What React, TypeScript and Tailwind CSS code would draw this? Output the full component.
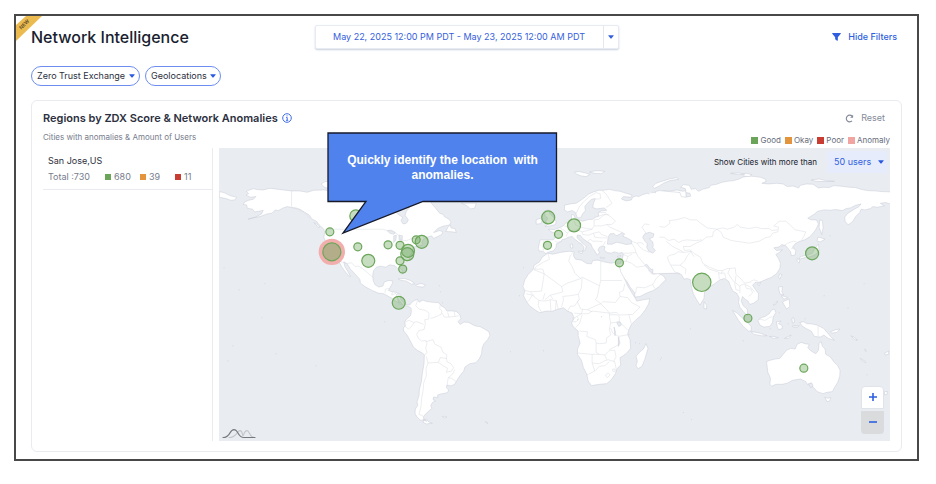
import React, {useState} from "react";

type Marker = { x: number, y: number, r: number, anomaly?: boolean };

const markers: Marker[] = [
    {x: 356, y: 216, r: 6},
    {x: 330, y: 232, r: 4},
    {x: 332, y: 252, r: 9, anomaly: true},
    {x: 358, y: 247, r: 4},
    {x: 368.5, y: 261, r: 6.5},
    {x: 388.3, y: 245, r: 4},
    {x: 400.3, y: 245.5, r: 4},
    {x: 416.5, y: 240, r: 4},
    {x: 422, y: 242, r: 6.5},
    {x: 408.3, y: 251, r: 6.5},
    {x: 407.6, y: 254.3, r: 6.5},
    {x: 400.3, y: 261, r: 4},
    {x: 403, y: 269.3, r: 4},
    {x: 399, y: 303, r: 6.5},
    {x: 548.7, y: 217.5, r: 6.5},
    {x: 574.6, y: 225.5, r: 6.5},
    {x: 559, y: 234.5, r: 4},
    {x: 548, y: 245.5, r: 4},
    {x: 620, y: 263, r: 4},
    {x: 702.5, y: 282.5, r: 9.2},
    {x: 813, y: 253.5, r: 6.5},
    {x: 748.7, y: 318.5, r: 4},
    {x: 804.7, y: 368.5, r: 4},
];

const legend = [
    {label: "Good", color: "bg-[#6aa55a]"},
    {label: "Okay", color: "bg-[#e3943c]"},
    {label: "Poor", color: "bg-[#c83c32]"},
    {label: "Anomaly", color: "bg-[#f0a5a3]"},
];

// every region is drawn three times larger around its own origin
const regions = [
    {
        id: "north-america", x: 210, y: 140,
        land: [
            "M28 155L42 158 60 167 80 172 75 180 62 181 48 176 28 172Z",
            "M109 155L118 150 132 146 140 149 160 150 180 145 196 147 220 150 245 153 270 153 292 157 312 151 340 150 360 152 360 120 640 120 665 190 678 205 690 220 700 223 704 230 718 238 724 246 720 255 700 259 684 266 672 278 690 272 700 276 696 284 686 289 672 296 666 288 652 292 640 299 636 309 640 315 625 318 612 322 607 330 606 340 598 350 600 360 585 367 572 374 570 382 578 394 577 403 571 400 564 386 556 378 540 375 528 382 512 379 500 382 492 392 489 404 490 422 496 435 507 442 519 439 524 426 538 422 550 424 546 434 540 445 536 452 548 456 562 458 566 465 564 480 568 492 578 494 588 494 588 492 575 490 561 486 548 476 540 472 522 462 505 460 487 452 468 442 452 430 450 418 438 405 422 388 412 372 402 366 405 380 414 395 422 410 416 408 404 393 394 378 388 366 376 358 365 345 354 326 348 308 342 292 345 276 340 266 328 255 320 244 306 237 298 225 284 217 270 208 258 204 245 203 232 200 218 205 205 212 196 210 186 220 172 222 150 230 130 234 114 238 138 231 155 222 160 211 148 214 134 216 128 208 112 205 110 195 100 194 104 186 116 181 130 178 138 170 122 172 108 166 116 161Z",
            "M334 132L345 125 358 124 358 145 345 143Z",
            "M708 275L715 262 722 255 724 264 736 266 740 278 728 276Z",
            "M565 417L585 416 602 422 616 432 605 433 590 424 572 421Z",
            "M618 436L634 431 648 436 640 442 622 440Z",
            "M755 190L800 190 795 205 783 207 770 196Z",
            "M312 248L320 252 330 262 325 263Z",
        ],
        water: [
            "M548 188L610 188 601 201 590 214 586 226 596 240 590 250 580 252 574 242 579 232 568 225 556 215 550 202Z",
            "M532 272L545 271 557 278 552 283 540 280Z",
            "M552 288L560 286 558 302 552 308Z",
            "M568 286L578 288 577 302 568 299Z",
        ],
        borders: [
            "M245 153V203L262 208 280 216 300 235",
            "M345 268H518L532 272 548 275 566 285 574 300 590 303 606 296 625 296 634 285 640 286 644 298",
            "M376 363L392 365 410 371 425 369 436 380 446 379 459 387 470 396 490 413",
            "M526 459L527 448 538 446M548 456L546 466 560 460",
        ],
    },
    {
        id: "south-america", x: 210, y: 290,
        land: [
            "M570 12L574 30 586 44 600 46 606 38 614 32 624 29 628 37 640 31 650 35 664 37 678 38 688 39 694 47 706 55 712 64 724 63 740 65 750 74 754 86 745 96 752 104 763 97 777 98 795 108 812 111 828 120 838 126 841 137 834 150 823 162 818 174 816 192 810 206 799 219 781 222 766 232 762 245 751 258 742 272 735 284 724 289 712 286 710 293 717 301 714 309 694 313 684 316 684 324 672 322 670 330 678 334 669 338 663 348 667 356 658 364 648 373 641 382 644 391 632 392 622 382 616 372 617 358 624 348 622 336 628 318 629 300 635 276 638 250 643 222 644 196 638 190 623 182 611 172 602 154 592 136 582 124 581 115 587 108 585 95 592 87 602 78 605 66 604 55 596 50 580 46 566 28 560 14Z",
            "M642 392L650 388 656 396 668 401 650 403 640 398Z",
            "M698 381L706 380 712 383 704 385Z",
            "M827 396L835 400 832 402Z",
        ],
        water: ["M642 388L652 395 641 392Z"],
        borders: [
            "M624 32L618 48 628 58 648 62 658 70 657 88 645 90 647 102 643 120",
            "M586 96L598 92 612 98 622 96 642 104M586 110L596 118 606 110 614 98",
            "M643 120L628 122 621 134 626 146 636 154 648 152 652 160 648 176 652 188 644 198",
            "M648 156L670 150 676 164 694 172 700 188 712 196 710 206 692 204 686 218 668 219 655 220 650 200",
            "M686 218L700 228 714 236 710 248 726 244 732 234 724 222 712 216 710 204",
            "M655 220L649 236 650 258 642 280 640 304 636 326 634 350 628 374 641 380",
            "M736 240L728 254 716 264 712 286M716 264L726 266 740 276",
            "M692 42L690 56 697 64 694 74 686 78 676 82 662 86M697 70L704 82 718 82 714 68M718 82L736 80 734 66M736 80L748 78",
        ],
    },
    {
        id: "europe", x: 440, y: 140,
        land: [
            "M302 300L299 312 296 326 300 334 310 334 318 341 330 336 342 333 350 322 351 312 364 306 368 299 378 297 386 292 398 290 406 298 416 306 428 314 434 324 430 334 438 330 440 320 434 314 424 305 413 294 413 286 422 286 430 296 444 306 454 312 458 322 466 334 474 346 480 338 476 330 480 322 490 318 497 321 494 330 503 338 516 340 524 336 538 340 548 338 552 344 548 360 543 371 535 370 528 378 540 394 552 414 562 424 572 442 585 458 587 472 602 470 622 460 642 452 660 440 668 430 680 420 672 408 660 402 652 396 644 403 634 396 626 386 616 376 622 373 632 386 646 394 660 396 672 400 690 400 722 402 740 180 740 152 730 154 712 150 690 154 675 153 656 158 640 157 636 166 625 160 610 164 598 170 590 168 580 172 576 180 560 183 546 177 552 170 574 172 578 165 560 160 542 154 525 152 510 148 492 151 478 151 462 156 448 162 436 172 424 181 410 190 392 192 375 196 375 210 384 216 398 212 408 218 414 234 424 233 430 221 438 212 436 200 446 188 456 178 468 176 462 190 460 203 472 207 494 204 502 211 486 213 476 218 478 229 468 232 460 238 446 239 430 244 418 240 408 240 404 225 396 224 396 240 386 247 378 250 370 259 358 264 344 269 326 268 334 275 346 280 347 292 342 300 320 300Z",
            "M316 212L328 210 330 220 340 230 350 244 348 254 332 258 316 260 326 252 318 245 325 236 316 226Z",
            "M290 240L302 235 308 242 304 251 290 253Z",
            "M405 96L420 95 438 99 452 103 440 110 426 108 412 103Z",
            "M450 96L470 92 496 94 486 101 464 100Z",
            "M640 140L650 130 668 124 690 117 712 113 718 118 692 122 674 129 660 138 646 145Z",
            "M416 334L430 335 428 341 418 338Z",
            "M392 314L399 312 400 324 394 325Z",
            "M482 352L496 354 494 357 484 356Z",
            "M533 350L544 347 540 353Z",
        ],
        water: [
            "M505 304L506 292 512 282 524 281 530 288 540 284 548 278 556 282 550 289 562 294 576 302 577 312 560 314 546 310 532 307 518 313 504 313Z",
        ],
        borders: [
            "M313 303L310 318 312 332M346 302L352 307 368 304M362 264L374 272 384 280 380 290M374 258L390 262 386 272M404 243L408 255 424 262 412 270 396 272 384 278",
            "M424 262L442 266 458 268 464 258 464 240M412 270L428 276 444 272 458 268M428 276L430 284 448 286 462 280 480 276 486 284 504 290M444 306L452 298 460 304 476 304 490 306",
            "M462 280L466 292 484 294 502 294M464 258L486 258 502 254 512 262 530 270 548 278M464 240L478 238 490 228 500 222 516 232 528 244 516 254 502 254",
            "M478 229L492 224 508 224M478 218L500 218M410 220L420 200 432 186 450 170 470 158 482 162 484 176 470 178M488 152L500 162 510 178 518 190 500 203",
            "M498 304L492 316M576 304L592 310 604 308 614 314M594 310L600 320 612 330M578 312L586 326 590 338 568 340 548 340",
            "M552 344L566 350 578 342M566 350L560 364 550 366 546 372M560 364L576 370 592 382 606 380 616 378M590 338L596 350 606 362 616 374",
            "M612 330L626 336 640 340 662 342 680 346 684 362 686 380 694 398",
            "M588 462L592 442 616 444 640 434 652 414 664 404M640 434L646 446M626 390L636 402 652 402",
            "M620 280L608 262 616 252 640 256 664 258 680 244 700 238 724 232",
            "M640 300L660 300 668 290 690 302 706 312 722 322M660 300L664 316 682 326 700 334 716 334",
        ],
    },
    {
        id: "asia", x: 660, y: 140,
        land: [
            "M-12 155L0 152 30 155 45 156 62 158 66 170 78 172 94 169 92 160 80 158 78 146 64 142 72 134 90 136 96 148 108 146 118 154 130 148 150 143 154 136 172 133 188 127 204 124 224 122 240 117 250 112 268 108 290 110 304 112 320 118 320 125 308 130 328 132 352 130 372 132 384 140 402 138 418 144 424 136 442 132 462 133 478 144 492 142 510 143 524 137 548 139 572 142 590 143 606 148 626 152 650 153 670 155 700 156 700 194 680 188 664 190 676 198 654 202 642 200 634 206 618 210 606 208 602 218 590 230 580 246 567 255 558 244 557 232 564 222 582 210 600 200 606 192 590 196 574 204 562 206 550 212 530 209 512 211 494 210 476 214 464 224 446 235 456 240 472 240 478 252 472 266 462 280 450 292 436 300 420 305 408 312 400 322 410 332 408 345 397 348 394 335 386 325 380 318 368 314 360 321 344 324 352 332 370 330 360 338 350 344 358 356 364 370 362 386 352 402 336 413 318 420 302 427 288 428 280 436 288 448 298 462 297 480 284 490 272 494 266 484 255 476 250 470 246 484 252 498 264 508 266 528 254 518 242 502 238 488 240 474 232 460 222 455 214 440 208 424 196 416 182 420 166 432 150 442 136 456 134 476 122 496 112 480 102 462 96 440 94 420 84 416 74 418 66 404 58 400 -20 402Z",
            "M482 240L490 242 492 264 488 284 480 262Z",
            "M476 292L486 294 498 298 484 306 474 304Z",
            "M478 312L480 332 472 342 456 350 436 354 420 358 424 350 444 346 460 340 466 328Z",
            "M414 356L422 360 420 370 414 364Z",
            "M362 402L368 404 362 418 358 412Z",
            "M295 432L304 428 300 438Z",
            "M134 486L142 496 142 508 134 506Z",
            "M250 103L262 100 278 104 270 110 252 108Z",
            "M214 100L240 99 256 103 236 104Z",
            "M456 120L480 117 500 122 526 124 500 125 470 124Z",
            "M358 442L370 440 368 456 374 466 362 462Z",
            "M370 486L390 478 392 500 382 508 374 494Z",
            "M342 496L356 484 350 494Z",
            "M366 468L378 470 386 474 374 478Z",
        ],
        water: [],
        borders: [
            "M0 260L16 262 32 250 30 242 50 240 76 233 94 240 112 240 124 250 144 264 174 268",
            "M174 268L190 264 204 268 224 262 234 254 244 262 268 266 292 262 306 266 330 266 338 272 356 270",
            "M174 268L186 278 192 292 216 302 244 306 270 310 300 304 318 294 334 290 340 280 356 276 358 262 344 258 360 244 380 244 394 256 408 270 440 276 434 290 428 300",
            "M174 268L162 276 160 290 140 292 130 302 110 310 92 320 72 320 76 332 92 330 106 342 124 352 130 370 150 382 176 392 190 392 204 386 212 386",
            "M0 292L14 292 28 302 44 298 58 308 70 302 84 300 108 302 128 300M20 304L40 320 60 330 72 336",
            "M24 352L32 346 44 344 56 336 74 338 96 334 84 348 76 364 62 376 34 376 28 364 24 352M34 376L46 396 62 402M62 376L80 388 78 402M94 334L104 350",
            "M134 376L150 388 176 396M178 396L180 418M178 400L196 400 200 416M190 392L186 402M212 386L206 400 218 418 226 428 230 450 240 452",
            "M212 386L228 384 230 404 242 414 256 430 270 428 284 420 296 424M230 408L228 428 242 440 242 460M242 438L256 432 262 446 276 448 280 460 268 470M258 434L274 442 286 456",
            "M366 322L386 310 402 304 412 306M396 326L406 324",
        ],
    },
    {
        id: "africa", x: 500, y: 200,
        land: [
            "M145 160L160 163 186 157 210 154 224 156 222 168 228 178 246 181 262 191 276 192 280 182 296 181 314 186 334 190 350 188 360 198 364 216 374 234 386 260 398 280 408 296 412 304 432 300 451 297 448 312 438 330 424 348 408 362 396 374 388 390 385 404 392 420 394 446 380 462 362 474 364 496 352 508 348 522 336 540 322 552 300 554 276 558 266 544 262 524 252 504 246 482 234 464 234 448 242 430 236 408 236 394 222 382 216 370 224 356 218 340 204 334 192 324 176 328 160 334 140 334 120 339 106 330 90 318 80 304 72 288 76 272 70 260 76 240 86 224 100 210 104 196 120 186 128 172Z",
            "M440 432L446 446 442 460 436 480 428 500 416 507 410 498 414 484 410 470 420 458 432 448Z",
        ],
        water: [
            "M352 368L362 366 366 376 358 380Z",
            "M344 382L348 396 347 408Z",
            "M357 412L360 430 357 440Z",
        ],
        borders: [
            "M145 160L150 178 130 188 110 200 104 210M102 208L130 208 134 222 126 274 92 276 76 272M104 210L134 222 186 260 204 250 244 236 226 220 218 200 208 184 212 168 220 158",
            "M244 236L248 232 300 258 304 242V184M304 242H368M300 258L294 290 288 300 304 312 310 306 348 308 362 290 360 278 372 272 376 252",
            "M248 234L246 264 236 284 240 298 234 306 244 328 264 330 288 318 304 312M186 260L190 276 170 282 152 286 136 300M190 290L210 288 236 284",
            "M80 282L98 286 118 302 134 304 152 300 170 302 176 328M98 286L90 300 84 306M118 302L116 318 126 338M152 300L154 332M170 302L168 330M186 322L192 300 190 290M152 286L160 298",
            "M136 280L130 300M92 276L104 288M204 334L212 320 226 318 238 300M224 340L246 342 250 328M218 358L232 350 246 342",
            "M246 342L266 342 278 334 330 340 330 352 334 370 330 388 334 406 322 414 320 430 300 432 290 430 288 420 262 410 264 396 240 394",
            "M264 330L278 336M248 345L240 372 228 384M304 312L320 328 330 340 352 338 360 346 400 344 422 322 396 308 386 294 362 290",
            "M330 345L354 345 360 352V366L334 370M360 366L384 390M334 385L340 400 358 410 392 404M358 410L362 432 352 438M388 344L396 372",
            "M234 460L278 464 300 464 290 458 290 430M278 464V490L286 514 262 526M278 490L300 492 314 484 326 480 346 486 350 506",
            "M300 464L316 466 322 480M316 466L330 452 346 452 350 472 342 486M330 450L352 438M286 514L300 500 316 498 330 486",
            "M318 526L326 520 332 526 324 534ZM340 508L348 508 346 516 340 514Z",
            "M232 350L238 358 230 366 220 366",
        ],
    },
    {
        id: "oceania", x: 660, y: 290,
        land: [
            "M322 216L332 212 348 208 362 206 372 194 382 182 394 176 408 178 414 164 426 158 438 162 451 164 446 174 456 184 470 192 478 182 480 160 486 156 490 170 498 178 500 194 514 202 524 216 536 228 543 242 542 260 536 278 526 294 520 306 504 308 492 312 474 306 466 296 460 292 456 280 446 286 440 276 424 268 400 272 386 280 370 284 350 284 338 290 332 284 334 266 326 248 324 232Z",
            "M497 323L506 326 515 324 512 334 504 336Z",
            "M296 92L306 84 318 80 330 72 338 60 346 58 350 68 342 82 340 98 332 110 314 112 302 106Z",
            "M220 62L234 70 246 82 262 96 276 110 276 124 268 124 252 110 238 92 228 76Z",
            "M276 126L292 128 308 132 324 138 306 138 284 134Z",
            "M422 98L434 96 444 102 456 102 474 106 494 116 504 128 516 142 526 152 508 146 494 136 484 142 466 140 456 124 440 116 428 108Z",
            "M352 96L366 94 358 102 368 106 370 116 358 120 354 110Z",
            "M514 126L530 120 542 118 534 128 518 130Z",
            "M330 140L344 140 358 144 344 146ZM376 146L388 140 396 136 388 146Z",
            "M398 86L404 84 406 98 400 100Z",
            "M400 108L420 108 416 112 402 112Z",
            "M576 138L590 146 594 152 584 148ZM604 206L620 216 620 219 610 214Z",
            "M676 306L686 306 684 314 677 316ZM677 190L690 184 688 194 678 196Z",
            "M617 178L622 182 620 186Z",
        ],
        water: ["M448 282L458 280 462 290 454 294Z"],
        borders: ["M477 107V139M300 88L318 92 330 84 340 80"],
    },
];

// islets too small to have an outline
const islets = [
    [265, 284], [239, 290], [224, 268], [385, 322], [276, 354], [233, 346], [316, 366], [228, 361], [262, 318],
    [511, 352], [524, 268], [578, 320], [640, 344], [661, 360], [636, 343], [691, 329], [684, 413], [692, 420],
    [662, 358], [831, 236], [849, 308], [825, 296], [865, 284], [868, 375], [858, 340], [744, 341], [441, 292],
    [443, 303], [440, 286], [520, 296], [544, 351], [602, 317], [780, 313], [789, 324], [771, 329], [806, 319],
];

function Caret({className}: { className?: string }) {
    return <svg viewBox="0 0 8 5" aria-hidden="true" className={`pointer-events-none w-[6px] ${className || ""}`}>
        <path d="M.8 .3H7.2Q8 .4 7.5 1.1L4.6 4.5Q4 5 3.4 4.5L.5 1.1Q0 .4 .8 .3Z" fill="currentColor"/>
    </svg>
}

function PillSelect({label, width}: { label: string, width: string }) {
    return <div className={`relative ${width}`}>
        <select aria-label={label}
                className="block w-full h-5 pl-[5px] appearance-none rounded-full border border-[#6d8df0] bg-white text-[9px] leading-4 text-[#2c3040]">
            <option>{label}</option>
        </select>
        <Caret className="absolute right-[5px] top-2 text-[#2a5ae0]"/>
    </div>
}

function Ribbon() {
    return <svg viewBox="0 0 27 27" className="absolute left-0 top-0 size-[27px]">
        <path d="M0 9L10 0H26L0 25Z" fill="#ecbb50"/>
        <text x="9.500" y="9.500" transform="rotate(-44 9.500 9.500)" textAnchor="middle" fontSize="5" fontWeight="600"
              fontFamily="Inter, sans-serif" fill="#5a4a28">NEW
        </text>
    </svg>
}

function WorldMap() {
    return <svg viewBox="219 148 672 293" className="block w-full bg-[#e9ecf1]" role="img" aria-label="World map">
        {regions.map((r) =>
            <g key={r.id} transform={`translate(${r.x} ${r.y}) scale(.33333)`} strokeLinejoin="round">
                <g fill="#fff" stroke="#c6cbd7" strokeWidth="1.500">
                    {r.land.map((d) => <path key={d} d={d}/>)}
                </g>
                {/* hides the coastline where the two halves of Eurasia overlap */}
                {r.id === "asia" && <path d="M-30 160H4V390H-14L-30 380Z" fill="#fff"/>}
                <g fill="#e9ecf1" stroke="#c6cbd7" strokeWidth="1.500">
                    {r.water.map((d) => <path key={d} d={d}/>)}
                </g>
                <g fill="none" stroke="#d8dae1" strokeWidth="1.500">
                    {r.borders.map((d) => <path key={d} d={d}/>)}
                </g>
            </g>
        )}
        {/* Caspian Sea, over both halves */}
        <path transform="translate(440 140) scale(.33333)" fill="#e9ecf1" stroke="#c6cbd7" strokeWidth="1.500"
              d="M610 292L616 282 630 277 644 282 641 292 630 297 640 306 642 316 640 322 648 332 640 340 628 334 622 322 624 312 616 303Z"/>
        {islets.map(([x, y], i) => <circle key={i} cx={x} cy={y} r=".5" fill="#cdd1db"/>)}
        {markers.map((m, i) => <g key={i}>
            {m.anomaly && <circle cx={m.x} cy={m.y} r="13.200" fill="#f2aeac"/>}
            <circle cx={m.x} cy={m.y} r={m.r} fill={m.anomaly ? "#98ad7b" : "#6aa55a"}
                    fillOpacity={m.anomaly ? .7 : .38} stroke="#6ca65b" strokeWidth="1.200"/>
        </g>)}
        <g fill="none" strokeLinecap="round" strokeWidth="1.100">
            <path d="M229 438C237 438 237 431 240 431S242 436 243 436 244 431 247 431 249 438 255 438" stroke="#c4c6ca"/>
            <path d="M223 438C231 438 229 430 234 430S237 438 244 438H255" stroke="#76797e"/>
        </g>
    </svg>
}

function Callout() {
    return <div className="absolute left-[108px] -top-4 w-[231px] h-[103px]">
        <svg viewBox="0 0 231 103" className="absolute inset-0" aria-hidden="true">
            <path d="M1 1H229.500V69.500H96L16 101 39 69.500H1Z" fill="#5082ed" stroke="#15192a" strokeWidth="1.300"/>
        </svg>
        <p className="relative pt-[21px] text-center font-['Liberation_Sans',sans-serif] text-[12px] leading-[15px] font-bold text-white whitespace-pre">
            {"Quickly identify the location  with\nanomalies."}
        </p>
    </div>
}

export default function App() {
    const [users, setUsers] = useState("50 users");

    return <div className="p-[14px] pr-[17px] bg-white font-['Inter',sans-serif] text-[#2c3040]">
        <main className="relative border-2 border-[#484848] px-[15px] pt-[9px] pb-[7px]">
            <Ribbon/>
            <header className="grid grid-cols-[1fr_304px_1fr] items-center">
                <h1 className="text-[16px] leading-6 font-medium text-[#191e30]">Network Intelligence</h1>
                <div className="flex h-6 rounded-xs border border-[#e8ebf1] bg-white shadow-[0_1px_2px_#c8d0dc] text-[#3560dc]">
                    <button className="grow text-[9px]">May 22, 2025 12:00 PM PDT - May 23, 2025 12:00 AM PDT</button>
                    <button aria-label="Choose a time range"
                            className="w-[15px] flex items-center justify-center border-l border-[#e4e7ee]">
                        <Caret/>
                    </button>
                </div>
                <button className="flex items-center gap-[7px] justify-self-end pr-[5px] text-[9px] font-medium text-[#2f5fe0]">
                    <svg viewBox="0 0 10 9" className="w-[9px]" aria-hidden="true">
                        <path d="M.6 0H9.400Q10.200 .2 9.700 .9L6.500 4.600V8.200Q6.300 9 5.600 8.600L3.800 7.300Q3.500 7 3.500 6.700V4.600L.3 .9Q-.2 .2 .6 0Z"
                              fill="currentColor"/>
                    </svg>
                    Hide Filters
                </button>
            </header>

            <div className="mt-[17px] flex gap-[5px]">
                <PillSelect label="Zero Trust Exchange" width="w-[109px]"/>
                <PillSelect label="Geolocations" width="w-[76px]"/>
            </div>

            <section className="mt-[14px] rounded-md border border-[#e9ebf1] px-[11px] pt-[9px] pb-[10px]">
                <div className="flex items-center justify-between">
                    <h2 className="flex items-center gap-1 text-[11px] leading-4 font-semibold">
                        Regions by ZDX Score &amp; Network Anomalies
                        <svg viewBox="0 0 10 10" className="size-[10px]" fill="none" stroke="#3f6ce8" aria-hidden="true">
                            <circle cx="5" cy="5" r="4.300"/>
                            <path d="M4.200 4.500H5.200V7.200M4 7.300H6.200M5 2.400V3.400"/>
                        </svg>
                    </h2>
                    <button className="flex items-center gap-[7px] pr-[5px] text-[9px] leading-4 text-[#858b9b]">
                        <svg viewBox="0 0 10 10" className="size-[9px]" fill="none" stroke="currentColor"
                             strokeWidth="1.300" aria-hidden="true">
                            <path d="M7.800 7.600A3.700 3.700 0 1 1 7.900 2.500"/>
                            <path d="M9 .9V4.200H5.700Z" fill="currentColor" stroke="none"/>
                        </svg>
                        Reset
                    </button>
                </div>

                <div className="flex justify-between">
                    <p className="pt-[3px] pb-[3px] text-[8px] leading-4 text-[#777d8d]">Cities with anomalies &amp; Amount of Users</p>
                    <ul className="flex gap-1 pt-[6px] text-[8px] leading-4 text-[#686e7e]">
                        {legend.map((l) => <li key={l.label} className="flex items-center gap-[2px]">
                            <span className={`size-[7px] ${l.color}`}/>{l.label}
                        </li>)}
                    </ul>
                </div>

                <div className="flex gap-[6px]">
                    <aside className="w-[170px] shrink-0 border-r border-[#e9ebf1]">
                        <div className="border-b border-[#e9ebf1] pl-[5px] pt-[5px] pb-1">
                            <h3 className="text-[9px] leading-4">San Jose,US</h3>
                            <div className="flex text-[9px] leading-4 text-[#777d8d]">
                                <span className="w-[57px]">Total :730</span>
                                <span className="flex w-[35px] items-center gap-[3px]">
                                    <i className="size-[6px] bg-[#6aa55a]"/>680
                                </span>
                                <span className="flex w-[35px] items-center gap-[3px]">
                                    <i className="size-[6px] bg-[#e3943c]"/>39
                                </span>
                                <span className="flex items-center gap-[3px]">
                                    <i className="size-[6px] bg-[#c83c32]"/>11
                                </span>
                            </div>
                        </div>
                    </aside>

                    <div className="relative grow">
                        <WorldMap/>
                        <Callout/>
                        <div className="absolute right-[3px] top-[3px] flex items-center gap-[10px]">
                            <label htmlFor="min-users" className="text-[8px] text-[#161b2c]">
                                Show Cities with more than
                            </label>
                            <div className="relative w-[60px]">
                                <select id="min-users" value={users} onChange={(e) => setUsers(e.target.value)}
                                        className="block w-full h-[22px] pl-[7px] appearance-none rounded-xs bg-[#e7ecfd] text-[9px] text-[#2f5fe0]">
                                    <option>50 users</option>
                                    <option>100 users</option>
                                </select>
                                <Caret className="absolute right-[3px] top-[9px] text-[#2a5ae0]"/>
                            </div>
                        </div>
                        <div className="absolute right-[6px] bottom-[7px] flex w-[23px] flex-col gap-[2px] text-[#2f5fe0]">
                            <button aria-label="Zoom in"
                                    className="h-[23px] flex items-center justify-center rounded-t border border-[#e0e3ea] bg-white">
                                <svg viewBox="0 0 8 8" className="size-2" stroke="currentColor" strokeWidth="1.600">
                                    <path d="M0 4H8M4 0V8"/>
                                </svg>
                            </button>
                            <button aria-label="Zoom out"
                                    className="h-[23px] flex items-center justify-center rounded-b bg-[#dadbdc]">
                                <svg viewBox="0 0 8 8" className="size-2" stroke="currentColor" strokeWidth="1.600">
                                    <path d="M0 4H8"/>
                                </svg>
                            </button>
                        </div>
                    </div>
                </div>
            </section>
        </main>
    </div>
}
